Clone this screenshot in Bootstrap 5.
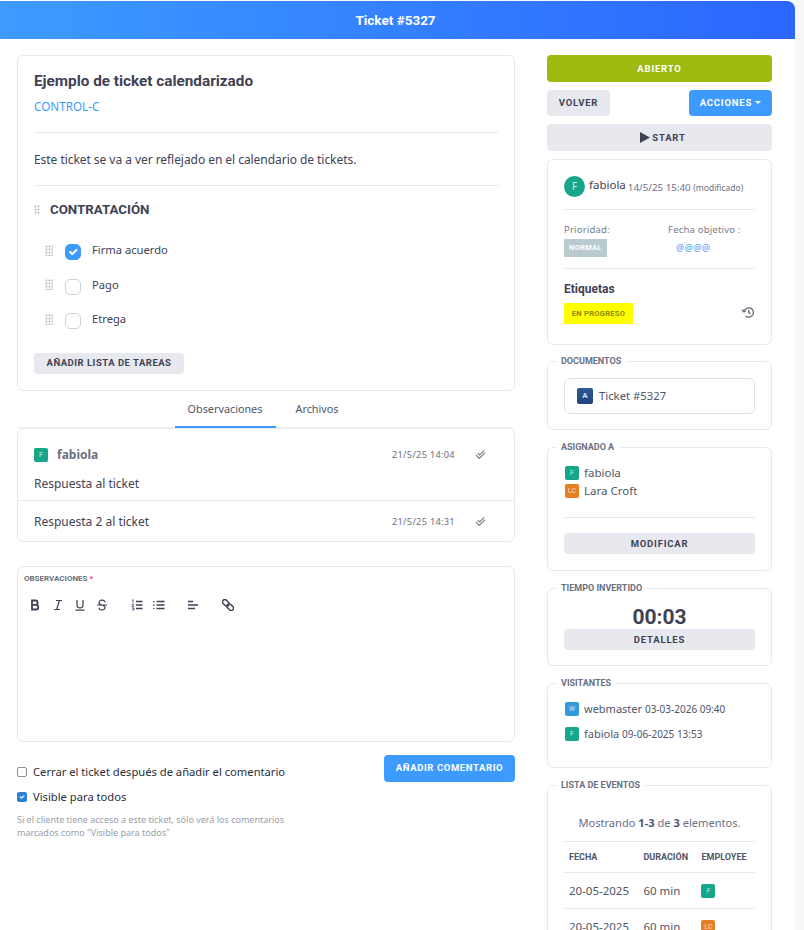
<!DOCTYPE html>
<html lang="es">
<head>
    <meta charset="UTF-8">
    <meta name="viewport" content="width=device-width, initial-scale=1.0">
    <title>Ticket #5327</title>
    <link href="https://cdn.jsdelivr.net/npm/bootstrap@5.3.0/dist/css/bootstrap.min.css" rel="stylesheet">
    <style>
        html, body { overflow: hidden; height: 930px; }
        body {
            font-family: "Noto Sans", sans-serif;
            font-size: 12px;
            color: #3f4254;
            background: #f7f8fa;
        }
        .app-wrap { width: 795px; background: #fff; min-height: 930px; padding-top: 1px; }
        .top-head {
            height: 38px;
            background: linear-gradient(90deg, #3d9bff, #2b66ff);
            border-top-right-radius: 8px;
            color: #fff;
            font: 700 13.5px "Roboto", sans-serif;
            padding-right: 4px;
        }
        .page-cols { padding: 16px 23px 0 17px; gap: 32px; }
        .left-col { width: 498px; flex: none; }
        .right-col { width: 225px; flex: none; }
        .box-line { border: 1px solid #e7e9ee; border-radius: 6px; background: #fff; }
        .main-box { padding: 15px 16px 16px; }
        .task-title { font: 700 15.3px/20px "Roboto", sans-serif; color: #3f4254; }
        .client-link { color: #3d9bff; font-size: 11.7px; line-height: 16px; text-decoration: none; margin-top: 7px; }
        .soft-hr { border: 0; border-top: 1px solid #e7e9ee; opacity: 1; margin: 0; }
        .hr-client { margin-top: 18px; }
        .ticket-text { padding: 18px 0 17px; line-height: 17px; letter-spacing: -.05px; }
        .list-title { font: 700 13.3px/18px "Roboto", sans-serif; margin: 15px 0 16px; gap: 10px; }
        .drag-dots {
            width: 8px; height: 11px; flex: none;
            background-image: radial-gradient(circle, #d4d4d4 1px, transparent 1.1px);
            background-size: 3px 3px;
        }
        .dots-title { width: 6px; height: 10px; }
        .task-row { height: 34.5px; padding-left: 11px; font-size: 11.2px; }
        .task-row span { line-height: 16px; position: relative; top: -2px; }
        .task-row .form-check-input {
            width: 16px; height: 16px; margin: 0 11px 0 12px;
            border-color: #ccd2dc; border-radius: 5px; flex: none;
        }
        .form-check-input:checked { background-color: #3d9bff; border-color: #3d9bff; }
        .btn-soft, .btn-sky, .btn-olive {
            font: 700 9.5px/1 "Roboto", sans-serif;
            letter-spacing: .8px;
            text-transform: uppercase;
            border: 0;
            border-radius: 4px;
        }
        .btn-soft { background: #e7e9ee; color: #3f4254; }
        .btn-sky { background: #3d9bff; color: #fff; }
        .btn-olive { background: #9eb90f; color: #fff; }
        .btn-soft:hover { background: #dcdfe6; color: #3f4254; }
        .btn-sky:hover { background: #2f8ef5; color: #fff; }
        .btn-olive:hover { background: #8faa0b; color: #fff; }
        .btn-tasks { width: 150px; height: 21px; margin-top: 14px; padding: 0; letter-spacing: .5px; }
        .tab-strip { height: 37px; border-bottom: 1px solid #eef0f3; padding-left: 1px; }
        .tab-strip a { color: #50566a; font-size: 10.8px; text-decoration: none; line-height: 35px; }
        .tab-strip a.is-on { width: 101px; text-align: center; border-bottom: 2px solid #3d9bff; margin-bottom: -1px; }
        .tab-strip a.is-off { padding: 0 20px; }
        .mini-av {
            width: 14px; height: 14px; border-radius: 2px; flex: none;
            color: rgba(255,255,255,.55); font: 700 7px/14px "Roboto", sans-serif; text-align: center;
        }
        .av-green { background: #17a689; }
        .av-orange { background: #e67e22; }
        .av-blue { background: #3498db; }
        .av-navy { background: linear-gradient(#2c5a94, #23427a); color: #cfe2ff; width: 16px; height: 16px; line-height: 16px; font-size: 8px; margin-right: 6px; }
        .msg-first { height: 71px; padding: 17px 16px 0; }
        .msg-name { font-weight: 700; color: #6b7080; font-size: 12px; margin-left: 9px; }
        .msg-date { font-size: 9.2px; color: #6b7080; letter-spacing: .3px; }
        .msg-check { width: 11px; height: 11px; color: #777; }
        .msg-meta { width: 106px; flex: none; padding-right: 12px; }
        .msg-text { margin-top: 12px; line-height: 16px; }
        .msg-second { height: 40px; padding: 2px 16px 0; }
        .editor-box { height: 176px; margin-top: 24px; padding: 5px 6px; }
        .small-label { font: 700 8px/14px "Roboto", sans-serif; color: #6b7080; text-transform: uppercase; }
        .small-label i { color: #f1416c; font-style: normal; }
        .tool-row { margin-top: 12px; padding-left: 5px; height: 14px; color: #3f4254; }
        .tool-row svg { width: 12px; height: 12px; flex: none; margin-left: 10px; }
        .tool-row svg:first-child { margin-left: 0; }
        .tool-row svg.tool-gap { margin-left: 23px; }
        .form-foot { margin-top: 13px; }
        .foot-checks { padding-top: 9px; }
        .btn-comment { width: 131px; height: 27px; padding: 0; font-size: 9.5px; letter-spacing: .6px; }
        .opt-check { font-size: 11.2px; color: #2a2d3a; line-height: 16px; }
        .opt-check + .opt-check { margin-top: 9px; }
        .opt-check .form-check-input { width: 10px; height: 10px; margin: 0 6px 0 0; border-radius: 2px; border-color: #8a8f99; flex: none; }
        .opt-check .form-check-input:checked { background-color: #2f7fd8; border-color: #2f7fd8; }
        .help-text { font-size: 9px; line-height: 13px; color: #9a9ea8; width: 285px; margin-top: 8px; }
        .bar-main, .bar-start { height: 27px; padding: 0; }
        .bar-small { height: 26px; padding: 0; }
        .bar-row { margin-top: 8px; }
        .bar-start { margin-top: 8px; padding-left: 7px; }
        .btn-back { width: 63px; }
        .btn-actions { width: 83px; }
        .drop-caret { display: inline-block; border-top: 3px solid #fff; border-left: 3px solid transparent; border-right: 3px solid transparent; vertical-align: 2px; }
        .bar-start svg { margin-right: 2px; }
        .info-box { height: 186px; margin: 8px 0 10px; padding: 0 16px; }
        .who-row { padding-top: 16px; }
        .round-av { width: 21px; height: 21px; border-radius: 50%; background: #17a689; color: #cdeee6; font-size: 10px; line-height: 21px; text-align: center; flex: none; }
        .who-name { font-size: 11.5px; margin: 0 2px 3px 4px; }
        .who-date { font-size: 9.8px; color: #6b7080; padding-top: 3px; }
        .who-mod { font-size: 8.5px; }
        .hr-who { margin-top: 12px; }
        .info-fields { margin-top: 14px; }
        .hr-info { margin-top: 11px; }
        .prio-col { width: 104px; }
        .field-label { font-size: 9.5px; color: #777c8a; letter-spacing: .2px; line-height: 12px; margin-bottom: 3px; }
        .prio-tag { width: 43px; height: 18px; background: #b9cbce; color: #fff; font: 700 7.5px/18px "Roboto", sans-serif; text-align: center; letter-spacing: .3px; }
        .date-at { color: #3d9bff; font-size: 9px; letter-spacing: .6px; line-height: 18px; padding-left: 8px; }
        .tags-title { font: 700 12px/16px "Roboto", sans-serif; margin-top: 12px; }
        .tags-row { margin-top: 6px; }
        .tags-row svg { margin-top: -2px; }
        .tag-yellow { width: 69px; height: 21px; background: #ffff00; color: #8a8a00; font: 700 7.5px/21px "Roboto", sans-serif; text-align: center; letter-spacing: .3px; }
        .side-set { border: 1px solid #e7e9ee; border-radius: 6px; margin: 0 0 11px; background: #fff; padding: 0 16px; min-width: 0; }
        .side-set legend {
            float: none; width: auto; margin: 0 0 0 -8px; padding: 0 5px;
            font: 700 9px/12px "Roboto", sans-serif; color: #6b7080; text-transform: uppercase;
        }
        .set-docs { height: 75px; }
        .set-assign { height: 130px; }
        .set-time { height: 84px; }
        .set-visits { height: 91px; }
        .doc-link { height: 36px; margin-top: 11px; border: 1px solid #dfe2e8; border-radius: 6px; padding-left: 12px; color: #50566a; font-size: 11.3px; }
        .person-row { font-size: 11.5px; line-height: 18px; color: #50566a; gap: 5px; margin-left: 1px; }
        .first-person { margin-top: 11px; }
        .next-visit { margin-top: 7px; }
        .visit-row { font-size: 11px; }
        .hr-assign { margin-top: 17px; }
        .btn-modify { margin-top: 15px; }
        .time-big { font: 700 21px/24px "Roboto", sans-serif; text-align: center; color: #3f4254; margin-top: 11px; }
        .btn-wide { height: 21px; padding: 0; }
        .visit-date { font-size: 10px; color: #50566a; }
        .ev-summary { font-size: 11.1px; color: #6b7080; text-align: center; padding-top: 24px; height: 50px; }
        .ev-summary b { color: #50566a; }
        .ev-table { margin: 0; font-size: 11.5px; color: #50566a; }
        .ev-table th { font: 700 9px/1 "Roboto", sans-serif; text-transform: uppercase; color: #50566a; padding: 11px 5px 10px; white-space: nowrap; }
        .ev-table td { padding: 9px 5px; height: 35px; vertical-align: middle; white-space: nowrap; }
        .ev-table tr > * { border-color: #e7e9ee; }
        .ev-table thead tr { border-top: 1px solid #e7e9ee; }
    </style>
</head>
<body>
    <div class="app-wrap">
        <!-- Cabecera -->
        <div class="top-head d-flex align-items-center justify-content-center">Ticket #5327</div>

        <div class="page-cols d-flex align-items-start">
            <!-- Columna izquierda -->
            <div class="left-col">
                <div class="box-line main-box">
                    <div class="task-title">Ejemplo de ticket calendarizado</div>
                    <a class="client-link d-block" href="#">CONTROL-C</a>
                    <hr class="soft-hr hr-client">
                    <p class="ticket-text mb-0">Este ticket se va a ver reflejado en el calendario de tickets.</p>
                    <hr class="soft-hr">
                    <div class="d-flex align-items-center list-title">
                        <span class="drag-dots dots-title"></span><span>CONTRATACIÓN</span>
                    </div>
                    <label class="task-row d-flex align-items-center">
                        <span class="drag-dots"></span>
                        <input class="form-check-input" type="checkbox" checked>
                        <span>Firma acuerdo</span>
                    </label>
                    <label class="task-row d-flex align-items-center">
                        <span class="drag-dots"></span>
                        <input class="form-check-input" type="checkbox">
                        <span>Pago</span>
                    </label>
                    <label class="task-row d-flex align-items-center">
                        <span class="drag-dots"></span>
                        <input class="form-check-input" type="checkbox">
                        <span>Etrega</span>
                    </label>
                    <button class="btn btn-soft btn-tasks d-block">Añadir lista de tareas</button>
                </div>

                <div class="tab-strip d-flex justify-content-center">
                    <a class="is-on" href="#">Observaciones</a>
                    <a class="is-off" href="#">Archivos</a>
                </div>

                <div class="box-line">
                    <div class="msg-first">
                        <div class="d-flex align-items-center">
                            <span class="mini-av av-green">F</span>
                            <span class="msg-name flex-grow-1">fabiola</span>
                            <span class="msg-meta d-flex align-items-center justify-content-between">
                                <span class="msg-date">21/5/25 14:04</span>
                                <svg class="msg-check" viewBox="0 0 12 12" fill="none" stroke="currentColor" stroke-width="1.1"><path d="M3 4.5l2 2L10 1.5M1 6.5l3.5 3.8L11 4"/></svg>
                            </span>
                        </div>
                        <div class="msg-text">Respuesta al ticket</div>
                    </div>
                    <hr class="soft-hr">
                    <div class="msg-second d-flex align-items-center">
                        <span class="flex-grow-1">Respuesta 2 al ticket</span>
                        <span class="msg-meta d-flex align-items-center justify-content-between">
                            <span class="msg-date">21/5/25 14:31</span>
                            <svg class="msg-check" viewBox="0 0 12 12" fill="none" stroke="currentColor" stroke-width="1.1"><path d="M3 4.5l2 2L10 1.5M1 6.5l3.5 3.8L11 4"/></svg>
                        </span>
                    </div>
                </div>

                <div class="box-line editor-box">
                    <div class="small-label">Observaciones <i>*</i></div>
                    <div class="tool-row d-flex align-items-center">
                        <svg viewBox="0 0 12 12" fill="none" stroke="currentColor" stroke-width="1.8"><path d="M3 1.5h3.4a2.2 2.2 0 0 1 0 4.4H3zM3 5.9h4a2.3 2.3 0 0 1 0 4.6H3z"/></svg>
                        <svg style="margin-left:11px" viewBox="0 0 12 12" fill="none" stroke="currentColor" stroke-width="1.2"><path d="M4 1.5h6M2 10.5h6M7.3 1.5l-2.6 9"/></svg>
                        <svg viewBox="0 0 12 12" fill="none" stroke="currentColor" stroke-width="1.2"><path d="M3 1v5a3 3 0 0 0 6 0V1M1.5 11.2h9"/></svg>
                        <svg viewBox="0 0 12 12" fill="none" stroke="currentColor" stroke-width="1.2"><path d="M9 3.2a3 2.2 0 0 0-6 .3c0 3 6 2 6 5a3 2.2 0 0 1-6 .3M1 6h10"/></svg>
                        <svg class="tool-gap" viewBox="0 0 12 12" fill="none" stroke="currentColor" stroke-width="1.3"><path d="M5 2.5h6.5M5 6h6.5M5 9.5h6.5"/><path stroke-width=".8" d="M1 1.2l1-.5v3M.8 5.3h2L1 7.5h2M1 9h2v2H1"/></svg>
                        <svg viewBox="0 0 12 12" fill="none" stroke="currentColor" stroke-width="1.3"><path d="M3.5 2.5h8M3.5 6h8M3.5 9.5h8"/><path stroke-dasharray="1.4 2.1" d="M.8 2v8"/></svg>
                        <svg style="margin-left:22px" viewBox="0 0 12 12" fill="none" stroke="currentColor" stroke-width="1.4"><path d="M1 2.5h5M1 6h10M1 9.5h7"/></svg>
                        <svg class="tool-gap" viewBox="0 0 12 12" fill="none" stroke="currentColor" stroke-width="1.5"><g transform="rotate(45 6 6)"><rect x="-.8" y="3.7" width="7.4" height="4.6" rx="2.3"/><rect x="5.4" y="3.7" width="7.4" height="4.6" rx="2.3"/></g></svg>
                    </div>
                </div>

                <div class="form-foot d-flex justify-content-between align-items-start">
                    <div class="foot-checks">
                        <label class="opt-check d-flex align-items-center">
                            <input class="form-check-input" type="checkbox">Cerrar el ticket después de añadir el comentario
                        </label>
                        <label class="opt-check d-flex align-items-center">
                            <input class="form-check-input" type="checkbox" checked>Visible para todos
                        </label>
                        <div class="help-text">Si el cliente tiene acceso a este ticket, sólo verá los comentarios marcados como "Visible para todos"</div>
                    </div>
                    <button class="btn btn-sky btn-comment">Añadir comentario</button>
                </div>
            </div>

            <!-- Columna derecha -->
            <div class="right-col">
                <button class="btn btn-olive bar-main w-100 d-block">Abierto</button>
                <div class="bar-row d-flex justify-content-between">
                    <button class="btn btn-soft bar-small btn-back">Volver</button>
                    <button class="btn btn-sky bar-small btn-actions">Acciones <span class="drop-caret"></span></button>
                </div>
                <button class="btn btn-soft bar-start w-100 d-flex align-items-center justify-content-center">
                    <svg width="10" height="11" viewBox="0 0 10 11"><path fill="#3f4254" d="M0 0l10 5.5L0 11z"/></svg>Start
                </button>

                <div class="box-line info-box">
                    <div class="who-row d-flex align-items-center">
                        <span class="round-av">F</span>
                        <span class="who-name">fabiola</span>
                        <span class="who-date">14/5/25 15:40 <span class="who-mod">(modificado)</span></span>
                    </div>
                    <hr class="soft-hr hr-who">
                    <div class="info-fields d-flex">
                        <div class="prio-col">
                            <div class="field-label">Prioridad:</div>
                            <div class="prio-tag">NORMAL</div>
                        </div>
                        <div>
                            <div class="field-label">Fecha objetivo :</div>
                            <div class="date-at">@@@@</div>
                        </div>
                    </div>
                    <hr class="soft-hr hr-info">
                    <div class="tags-title">Etiquetas</div>
                    <div class="tags-row d-flex justify-content-between align-items-center">
                        <span class="tag-yellow">EN PROGRESO</span>
                        <svg width="13" height="13" viewBox="0 0 14 14" fill="none" stroke="#6f7380" stroke-width="1.5"><path d="M2.3 7a5 5 0 1 1 1.6 3.7"/><path fill="#6f7380" stroke="none" d="M0 2.5l4.5 4H.2z" transform="rotate(-12 2 4)"/><path d="M7.2 4v3.2l2 1.3"/></svg>
                    </div>
                </div>

                <fieldset class="side-set set-docs">
                    <legend>Documentos</legend>
                    <div class="doc-link d-flex align-items-center">
                        <span class="mini-av av-navy">A</span>Ticket #5327
                    </div>
                </fieldset>

                <fieldset class="side-set set-assign">
                    <legend>Asignado a</legend>
                    <div class="person-row first-person d-flex align-items-center">
                        <span class="mini-av av-green">F</span>fabiola
                    </div>
                    <div class="person-row d-flex align-items-center">
                        <span class="mini-av av-orange">LC</span>Lara Croft
                    </div>
                    <hr class="soft-hr hr-assign">
                    <button class="btn btn-soft btn-wide btn-modify w-100 d-block">Modificar</button>
                </fieldset>

                <fieldset class="side-set set-time">
                    <legend>Tiempo invertido</legend>
                    <div class="time-big">00:03</div>
                    <button class="btn btn-soft btn-wide w-100 d-block">Detalles</button>
                </fieldset>

                <fieldset class="side-set set-visits">
                    <legend>Visitantes</legend>
                    <div class="person-row visit-row first-person d-flex align-items-center">
                        <span class="mini-av av-blue">W</span><span>webmaster <span class="visit-date">03-03-2026 09:40</span></span>
                    </div>
                    <div class="person-row visit-row next-visit d-flex align-items-center">
                        <span class="mini-av av-green">F</span><span>fabiola <span class="visit-date">09-06-2025 13:53</span></span>
                    </div>
                </fieldset>

                <fieldset class="side-set">
                    <legend>Lista de eventos</legend>
                    <div class="ev-summary">Mostrando <b>1-3</b> de <b>3</b> elementos.</div>
                    <table class="table ev-table">
                        <thead>
                            <tr><th>Fecha</th><th>Duración</th><th>Employee</th></tr>
                        </thead>
                        <tbody>
                            <tr><td>20-05-2025</td><td>60 min</td><td><span class="mini-av av-green d-block">F</span></td></tr>
                            <tr><td>20-05-2025</td><td>60 min</td><td><span class="mini-av av-orange d-block">LC</span></td></tr>
                            <tr><td>20-05-2025</td><td>60 min</td><td><span class="mini-av av-green d-block">F</span></td></tr>
                        </tbody>
                    </table>
                </fieldset>
            </div>
        </div>
    </div>

    <script src="https://cdn.jsdelivr.net/npm/bootstrap@5.3.0/dist/js/bootstrap.bundle.min.js"></script>
</body>
</html>
